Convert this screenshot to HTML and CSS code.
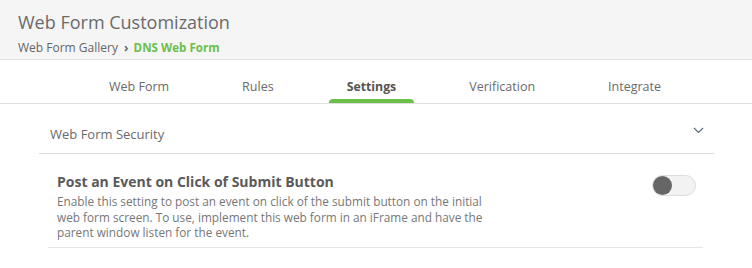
FILE: index.html
```html
<!DOCTYPE html>
<html lang="en">
<head>
  <meta charset="UTF-8">
  <meta name="viewport" content="width=device-width, initial-scale=1.0">
  <title>Web Form Customization</title>
  <link rel="stylesheet" href="styles.css">
</head>
<body>
  <div class="page-header">
    <h1>Web Form Customization</h1>
    <div class="breadcrumb">
      <span class="crumb">Web Form Gallery</span>
      <span class="crumb-sep">&rsaquo;</span>
      <span class="crumb-current">DNS Web Form</span>
    </div>
  </div>

  <div class="tabs">
    <div class="tab">Web Form</div>
    <div class="tab">Rules</div>
    <div class="tab active">Settings</div>
    <div class="tab">Verification</div>
    <div class="tab">Integrate</div>
  </div>

  <div class="content">
    <div class="section-head">
      <span>Web Form Security</span>
      <svg class="chevron" width="11" height="7" viewBox="0 0 11 7">
        <path d="M1 1 L5.5 5.5 L10 1" fill="none" stroke="#5b6b7c" stroke-width="1.2"/>
      </svg>
    </div>

    <div class="setting">
      <div class="setting-text">
        <div class="setting-title">Post an Event on Click of Submit Button</div>
        <div class="setting-desc">Enable this setting to post an event on click of the submit button on the initial web form screen. To use, implement this web form in an iFrame and have the parent window listen for the event.</div>
      </div>
      <div class="toggle"><span class="knob"></span></div>
    </div>
  </div>
</body>
</html>
```

FILE: styles.css
```css
body {
  font-family: "Open Sans", Arial, sans-serif;
  margin: 0;
  background-color: #ffffff;
  color: #666;
}

.page-header {
  background-color: #f5f5f5;
  border-bottom: 1px solid #e2e2e2;
  padding: 9px 18px 0;
  height: 50px;
}

h1 {
  margin: 0;
  font-size: 18px;
  font-weight: normal;
  color: #6a6a6a;
  line-height: 26px;
}

.breadcrumb {
  margin-top: 5px;
  font-size: 12px;
  line-height: 16px;
  color: #666;
}

.crumb-sep {
  margin: 0 2px 0 3px;
  font-weight: bold;
}

.crumb-current {
  color: #6cbf4a;
  font-weight: bold;
  font-size: 11.6px;
}

.tabs {
  display: flex;
  gap: 37px;
  padding-left: 91px;
  height: 43px;
  border-bottom: 1px solid #e0e0e0;
}

.tab {
  padding: 0 18px;
  font-size: 12.5px;
  line-height: 54px;
  color: #6a6a6a;
  position: relative;
}

.tab.active {
  font-weight: bold;
  color: #555;
  font-size: 12.3px;
}

.tab.active::after {
  content: "";
  position: absolute;
  left: 0;
  right: 0;
  bottom: 0;
  height: 4px;
  background-color: #6cbf4a;
  border-radius: 4px 4px 0 0;
}

.content {
  margin: 0 38px 0 39px;
}

.section-head {
  display: flex;
  justify-content: space-between;
  align-items: center;
  height: 39px;
  padding: 10px 10px 0 11px;
  border-bottom: 1px solid #dcdcdc;
  font-size: 13px;
  color: #6a6a6a;
}

.chevron {
  margin-top: -6px;
}

.setting {
  display: flex;
  justify-content: space-between;
  margin: 0 11px 0 9px;
  padding: 18px 7px 6px 9px;
  border-bottom: 1px solid #e6e6e6;
}

.setting-text {
  width: 432px;
}

.setting-title {
  font-size: 14px;
  font-weight: bold;
  color: #5a5a5a;
  line-height: 20px;
  margin-bottom: 2px;
}

.setting-desc {
  font-size: 11.8px;
  line-height: 15.5px;
  color: #777;
}

.toggle {
  width: 42px;
  height: 19px;
  margin-top: 3px;
  border: 1px solid #dddddd;
  border-radius: 11px;
  background-color: #f2f2f2;
  position: relative;
}

.knob {
  position: absolute;
  left: 0;
  top: 0;
  width: 19px;
  height: 19px;
  border-radius: 50%;
  background-color: #666;
}
```
